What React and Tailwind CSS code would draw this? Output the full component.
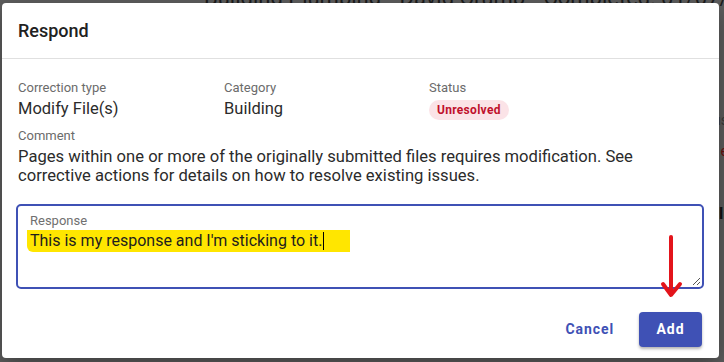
import React from 'react';

const font = { fontFamily: 'Roboto, "Noto Sans", Arial, sans-serif' };

const Field = ({ label, children }) => (
    <div className="flex flex-col">
        <span className="text-[13px] leading-[18px] text-[#6b6b6b]">{label}</span>
        <div className="mt-[1px] text-[16.5px] leading-[22px] text-[#2b2b2b]">{children}</div>
    </div>
);

export default function App() {
    return (
        <div className="relative w-[724px] h-[362px] overflow-hidden bg-[#5e5e5e]" style={font}>
            {/* Page behind the backdrop */}
            <div className="flex flex-col">
                <div className="pl-[204px] -mt-[14px] text-[22px] leading-[24px] text-[#1c1c1c] whitespace-nowrap">
                    Building Plumbing • David Crump • Completed: 01/07/2006
                </div>
                <div className="flex flex-col items-end mt-[100px] gap-[40px] text-[14px] -mr-[4px]">
                    <span className="text-[#3a3a3a]">us</span>
                    <span className="text-[#6a1010] -mt-[30px]">e</span>
                    <span className="text-[#111] font-bold text-[16px]">II</span>
                </div>
            </div>

            {/* Dialog */}
            <div className="absolute left-[2px] top-[3px] w-[717px] h-[355px] bg-white rounded-[4px] shadow-[0_8px_24px_rgba(0,0,0,0.35)] flex flex-col">
                <div className="h-[56px] px-[16px] flex items-center border-b border-[#e0e0e0]">
                    <h2 className="text-[18px] font-medium text-[#212121]">Respond</h2>
                </div>

                <div className="px-[16px] pt-[20px] flex flex-col">
                    <div className="grid grid-cols-[206px_205px_1fr]">
                        <Field label="Correction type">Modify File(s)</Field>
                        <Field label="Category">Building</Field>
                        <Field label="Status">
                            <span className="inline-flex items-center h-[20px] mt-[1px] px-[8px] rounded-full bg-[#fbe3e7] text-[#c0102c] text-[12px] font-bold tracking-[0.3px]">
                                Unresolved
                            </span>
                        </Field>
                    </div>

                    <div className="mt-[7px] flex flex-col">
                        <span className="text-[13px] leading-[18px] text-[#6b6b6b]">Comment</span>
                        <p className="mt-[2px] text-[16.6px] leading-[19px] text-[#2b2b2b] pr-[30px]">
                            Pages within one or more of the originally submitted files requires modification. See corrective actions for details on how to resolve existing issues.
                        </p>
                    </div>
                </div>

                {/* Response box */}
                <div className="relative mx-[14px] mt-[19px] w-[688px] h-[85px] border-2 border-[#3f51b5] rounded-[5px] pl-[12px] pt-[7px]">
                    <div className="text-[13px] leading-[16px] text-[#707070]">Response</div>
                    <div className="relative inline-flex items-center h-[22px] -ml-[3px] pl-[3px] pr-[26px] bg-[#ffe600] rounded-bl-[6px]">
                        <span className="text-[16px] leading-[20px] text-[#1e1e1e]">This is my response and I'm sticking to it.</span>
                        <span className="w-[1px] h-[18px] bg-black ml-[1px]" />
                    </div>
                    <svg className="absolute right-[1px] bottom-[1px]" width="10" height="10" viewBox="0 0 10 10">
                        <path d="M9 2 L2 9 M9 6 L6 9" stroke="#555" strokeWidth="1" />
                    </svg>
                </div>

                {/* Annotation arrow */}
                <svg className="absolute left-[656px] top-[231px]" width="28" height="66" viewBox="0 0 28 66">
                    <path d="M13 3 L13 60" stroke="#e3141b" strokeWidth="4" strokeLinecap="round" />
                    <path d="M5 50 L13 61 L22 50" fill="none" stroke="#e3141b" strokeWidth="4" strokeLinecap="round" strokeLinejoin="round" />
                </svg>

                <div className="mt-auto mb-[11px] mr-[17px] flex justify-end items-center gap-[17px]">
                    <button className="h-[35px] px-[8px] text-[14px] font-bold text-[#3f51b5] tracking-[0.9px]">Cancel</button>
                    <button className="h-[35px] w-[63px] rounded-[4px] bg-[#3f51b5] text-white text-[14px] font-bold tracking-[0.9px] shadow-[0_2px_3px_rgba(0,0,0,0.3)]">
                        Add
                    </button>
                </div>
            </div>
        </div>
    );
}
